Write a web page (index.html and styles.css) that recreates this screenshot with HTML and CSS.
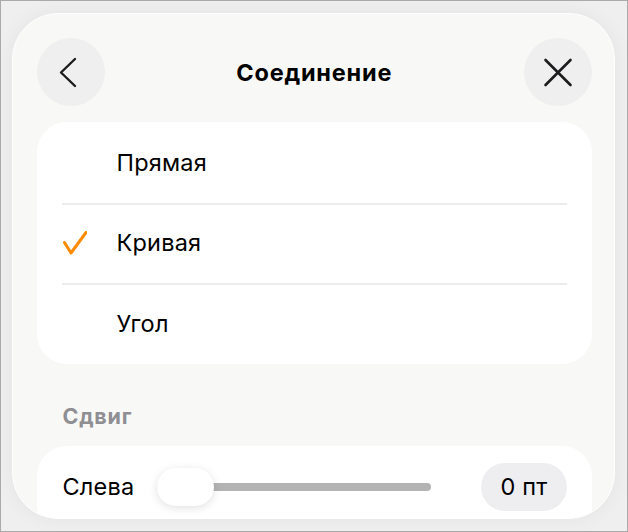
FILE: index.html
```html
<!DOCTYPE html>
<html lang="ru">
  <head>
    <meta charset="UTF-8" />
    <meta name="viewport" content="width=device-width, initial-scale=1.0" />
    <title>Соединение</title>
    <link rel="stylesheet" href="styles.css">
  </head>
  <body>
    <div class="frame">
      <div class="sheet">
        <div class="header">
          <button class="round" aria-label="Назад">
            <svg width="68" height="68" viewBox="0 0 68 68">
              <polyline points="38,21 24,34.5 38,48" fill="none" stroke="#1c1c1e" stroke-width="2.4" stroke-linecap="round" stroke-linejoin="round" />
            </svg>
          </button>
          <h1>Соединение</h1>
          <button class="round" aria-label="Закрыть">
            <svg width="68" height="68" viewBox="0 0 68 68">
              <path d="M21.5 22 L46.5 47 M46.5 22 L21.5 47" fill="none" stroke="#1c1c1e" stroke-width="2.6" stroke-linecap="round" />
            </svg>
          </button>
        </div>

        <div class="card list">
          <div class="row">
            <span class="mark"></span>
            <span class="label">Прямая</span>
          </div>
          <div class="row">
            <span class="mark">
              <svg width="24" height="24" viewBox="0 0 24 24">
                <polyline points="1.5,11.5 8,22 23,1.5" fill="none" stroke="#ff8c00" stroke-width="3" stroke-linecap="round" stroke-linejoin="round" />
              </svg>
            </span>
            <span class="label">Кривая</span>
          </div>
          <div class="row">
            <span class="mark"></span>
            <span class="label">Угол</span>
          </div>
        </div>

        <div class="section-title">Сдвиг</div>

        <div class="card">
          <div class="slider-row">
            <span class="label">Слева</span>
            <div class="slider">
              <div class="track"></div>
              <div class="thumb"></div>
            </div>
            <span class="value">0 пт</span>
          </div>
        </div>
      </div>
    </div>
  </body>
</html>
```

FILE: styles.css
```css
* {
  box-sizing: border-box;
}
body {
  margin: 0;
  font-family: Inter, "Noto Sans", sans-serif;
  color: #000;
}
.frame {
  width: 628px;
  height: 532px;
  border: 1px solid #aaa;
  background: #efefef;
  padding: 12px 0 0 11px;
  overflow: hidden;
}
.sheet {
  width: 603px;
  height: 506px;
  background: #f8f8f7;
  border: 1.5px solid #fff;
  border-radius: 46px;
  box-shadow: 0 0 20px rgba(0, 0, 0, 0.05);
  padding: 24px 22px 0 23.5px;
  overflow: hidden;
}
.header {
  display: flex;
  align-items: center;
  justify-content: space-between;
  height: 68px;
}
.header h1 {
  margin: 0;
  font-size: 23.5px;
  font-weight: 700;
  letter-spacing: 0.8px;
}
.round {
  width: 68px;
  height: 68px;
  border: none;
  border-radius: 50%;
  background: #efefef;
  padding: 0;
  display: flex;
}
.card {
  background: #fff;
  border-radius: 30px;
}
.list {
  margin-top: 16px;
}
.row {
  display: flex;
  align-items: center;
  height: 80.5px;
  padding-left: 26px;
  position: relative;
}
.row + .row::before {
  content: "";
  position: absolute;
  top: 0;
  left: 25px;
  right: 25px;
  height: 2px;
  background: #ececec;
}
.mark {
  width: 54px;
  display: flex;
  align-items: center;
}
.label {
  font-size: 23.5px;
  letter-spacing: 0.2px;
}
.section-title {
  font-size: 21.5px;
  font-weight: 700;
  letter-spacing: 0.8px;
  color: #8e8e93;
  padding: 39px 0 17px 26px;
}
.slider-row {
  display: flex;
  align-items: center;
  padding: 17px 25px 30px 26px;
}
.slider {
  position: relative;
  flex: 1;
  height: 38px;
  margin: 0 50px 0 23px;
  display: flex;
  align-items: center;
}
.track {
  width: 100%;
  height: 8px;
  background: #b3b3b3;
  border-radius: 4px;
}
.thumb {
  position: absolute;
  left: 0;
  top: 0;
  width: 57px;
  height: 38px;
  border-radius: 19px;
  background: #fff;
  box-shadow: 0 2px 10px rgba(0, 0, 0, 0.12);
}
.value {
  font-size: 23.5px;
  letter-spacing: 0.2px;
  background: #eeeef0;
  border-radius: 24px;
  height: 48px;
  width: 86px;
  display: flex;
  align-items: center;
  justify-content: center;
}
```
